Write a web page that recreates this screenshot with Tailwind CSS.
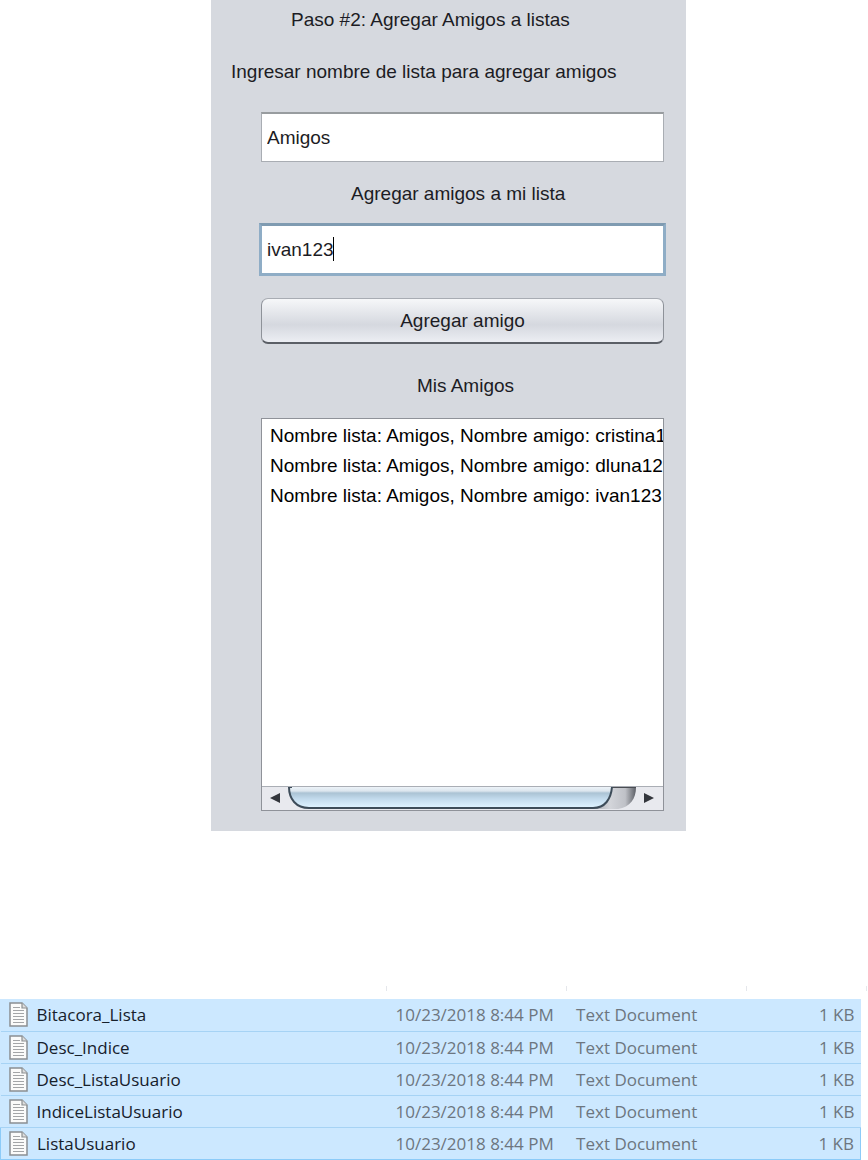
<!DOCTYPE html>
<html lang="es">
<head>
    <meta charset="UTF-8">
    <meta name="viewport" content="width=device-width, initial-scale=1.0">
    <script src="https://cdn.jsdelivr.net/npm/@tailwindcss/browser@4"></script>
    <title>Agregar Amigos a listas</title>
</head>
<body class="bg-white">
    <main class="grid grid-cols-[211fr_475fr_182fr]">
        <form class="col-start-2 min-w-0 bg-[#d6d9df] pl-[50px] pr-[22px] pt-2 pb-5 font-['Liberation_Sans',Arial,sans-serif] text-[19px] leading-6 text-[#1c1c24]" onsubmit="agregarAmigo(event)">
            <h1 class="pl-[30px] whitespace-nowrap">Paso #2: Agregar Amigos a listas</h1>
            <label class="-ml-[30px] mt-7 block whitespace-nowrap" for="lista">Ingresar nombre de lista para agregar amigos</label>
            <input class="mt-7 block h-[50px] w-full border border-t-2 border-[#a9adb3] border-t-[#989c9f] bg-white px-[5px] outline-none" type="text" id="lista" value="Amigos">
            <label class="mt-5 block pl-[90px] whitespace-nowrap" for="amigo">Agregar amigos a mi lista</label>
            <div class="relative -mx-[2px] mt-[17px]">
                <input class="block h-[53px] w-full border-3 border-[#8fadc6] border-t-[#7f9bb1] bg-white px-[5px] caret-transparent outline-none" type="text" id="amigo" value="ivan123">
                <span class="absolute left-[74px] top-[14px] h-6 w-px bg-black"></span>
            </div>
            <button class="mt-[22px] block h-[46px] w-full rounded-[7px] border border-b-2 border-[#8e9299] border-t-[#a8acb3] border-b-[#5b5f66] bg-linear-to-b from-[#f6f7f9] via-[#d5d8df] via-60% to-[#eceef3]" type="submit">Agregar amigo</button>
            <h2 class="mt-[30px] pl-2 pr-[2px] text-center">Mis Amigos</h2>
            <div class="mt-5 border border-[#8f9299] bg-white">
                <ul class="h-[367px] overflow-hidden pl-2 pt-[2px] leading-[30px] whitespace-nowrap text-black" id="lista-amigos">
                    <li>Nombre lista: Amigos, Nombre amigo: cristina123</li>
                    <li>Nombre lista: Amigos, Nombre amigo: dluna123</li>
                    <li>Nombre lista: Amigos, Nombre amigo: ivan123</li>
                </ul>
                <!-- barra de desplazamiento horizontal -->
                <div class="flex h-6 border-t border-[#aaaeb5] bg-[#e8e9ee]">
                    <svg class="h-[23px] w-[50px] shrink-0" viewBox="0 0 50 23">
                        <defs>
                            <linearGradient id="azul" gradientUnits="userSpaceOnUse" x1="0" y1="0" x2="0" y2="20">
                                <stop offset="0" stop-color="#edf3f8"/>
                                <stop offset=".2" stop-color="#dce6ee"/>
                                <stop offset=".3" stop-color="#abc3d4"/>
                                <stop offset=".6" stop-color="#c3dbed"/>
                                <stop offset="1" stop-color="#ddf2ff"/>
                            </linearGradient>
                        </defs>
                        <path d="M8 11L18 6V16Z" fill="#33363c"/>
                        <path d="M27 0C27 12 34 21 47 21H50V0Z" fill="url(#azul)"/>
                        <path d="M26 0H30M27 0C27 12 34 21 47 21H50" fill="none" stroke="#3d4c59" stroke-width="2"/>
                    </svg>
                    <div class="h-[22px] grow border-b-2 border-[#3d4c59] bg-[linear-gradient(#edf3f8,#dce6ee_20%,#abc3d4_30%,#c3dbed_60%,#ddf2ff)]"></div>
                    <svg class="h-[23px] w-[70px] shrink-0" viewBox="0 0 70 23">
                        <defs>
                            <linearGradient id="gris">
                                <stop offset="0" stop-color="#a8abb2"/>
                                <stop offset=".4" stop-color="#d3d5da"/>
                                <stop offset=".75" stop-color="#bfc1c7"/>
                                <stop offset="1" stop-color="#5c5f66"/>
                            </linearGradient>
                        </defs>
                        <path d="M19 0H43C43 12 37 20 25 22H0Z" fill="url(#gris)"/>
                        <path d="M0 0H19C18 12 12 21 0 21Z" fill="url(#azul)"/>
                        <path d="M18 0H43" fill="none" stroke="#4a4d53" stroke-width="2"/>
                        <path d="M19 0C18 12 12 21 0 21" fill="none" stroke="#3d4c59" stroke-width="2"/>
                        <path d="M61 11L51 6V16Z" fill="#33363c"/>
                    </svg>
                </div>
            </div>
        </form>
    </main>

    <svg class="hidden">
        <symbol id="documento" viewBox="0 0 19 25">
            <path d="M1 1H13L18 6V24H1Z" fill="#fbfbfa" stroke="#8b8f92" stroke-width="1.5"/>
            <path d="M13 1V6H18" fill="#dddddd" stroke="#8b8f92" stroke-width="1.2"/>
            <path d="M4 5.5H11M4 8.5H15M4 11.5H15M4 14.5H15M4 17.5H15M4 20.5H15" stroke="#a3a5a7" stroke-width="1.2"/>
        </symbol>
    </svg>

    <section class="mt-[155px] font-['Open_Sans','Segoe_UI',sans-serif] text-[17px] leading-[31px] text-[#6d7680]">
        <div class="mb-2 grid h-[5px] grid-cols-[387fr_180fr_180fr_120fr_1fr]">
            <span class="border-r border-gray-200"></span>
            <span class="border-r border-gray-200"></span>
            <span class="border-r border-gray-200"></span>
            <span class="border-r border-gray-200"></span>
        </div>
        <div class="pr-[7px]">
            <table class="w-full table-fixed border-collapse bg-[#cce8ff] whitespace-nowrap">
                <colgroup>
                    <col class="w-[45%]">
                    <col class="w-[21%]">
                    <col class="w-[21%]">
                    <col class="w-[13%]">
                </colgroup>
                <tbody>
                    <tr class="h-8 border-b border-[#a6d3f5]">
                        <td class="p-0 pl-2 text-[#16202b]"><div class="flex items-center gap-[9px]"><svg class="h-[25px] w-[19px]"><use href="#documento"/></svg>Bitacora_Lista</div></td>
                        <td class="p-0 pl-2">10/23/2018 8:44 PM</td>
                        <td class="p-0 pl-2">Text Document</td>
                        <td class="p-0 pr-[6px] text-right">1 KB</td>
                    </tr>
                    <tr class="h-8 border-b border-[#a6d3f5]">
                        <td class="p-0 pl-2 text-[#16202b]"><div class="flex items-center gap-[9px]"><svg class="h-[25px] w-[19px]"><use href="#documento"/></svg>Desc_Indice</div></td>
                        <td class="p-0 pl-2">10/23/2018 8:44 PM</td>
                        <td class="p-0 pl-2">Text Document</td>
                        <td class="p-0 pr-[6px] text-right">1 KB</td>
                    </tr>
                    <tr class="h-8 border-b border-[#a6d3f5]">
                        <td class="p-0 pl-2 text-[#16202b]"><div class="flex items-center gap-[9px]"><svg class="h-[25px] w-[19px]"><use href="#documento"/></svg>Desc_ListaUsuario</div></td>
                        <td class="p-0 pl-2">10/23/2018 8:44 PM</td>
                        <td class="p-0 pl-2">Text Document</td>
                        <td class="p-0 pr-[6px] text-right">1 KB</td>
                    </tr>
                    <tr class="h-8 border-b border-[#a6d3f5]">
                        <td class="p-0 pl-2 text-[#16202b]"><div class="flex items-center gap-[9px]"><svg class="h-[25px] w-[19px]"><use href="#documento"/></svg>IndiceListaUsuario</div></td>
                        <td class="p-0 pl-2">10/23/2018 8:44 PM</td>
                        <td class="p-0 pl-2">Text Document</td>
                        <td class="p-0 pr-[6px] text-right">1 KB</td>
                    </tr>
                    <tr class="h-8 border border-[#8ccbf8]">
                        <td class="p-0 pl-2 text-[#16202b]"><div class="flex items-center gap-[9px]"><svg class="h-[25px] w-[19px]"><use href="#documento"/></svg>ListaUsuario</div></td>
                        <td class="p-0 pl-2">10/23/2018 8:44 PM</td>
                        <td class="p-0 pl-2">Text Document</td>
                        <td class="p-0 pr-[6px] text-right">1 KB</td>
                    </tr>
                </tbody>
            </table>
        </div>
    </section>
    <script>
        // agrega el amigo escrito a la lista
        function agregarAmigo(event) {
            event.preventDefault();
            const lista = document.getElementById('lista').value;
            const amigo = document.getElementById('amigo').value;
            const li = document.createElement('li');
            li.textContent = `Nombre lista: ${lista}, Nombre amigo: ${amigo}`;
            document.getElementById('lista-amigos').appendChild(li);
        }
    </script>
</body>
</html>
